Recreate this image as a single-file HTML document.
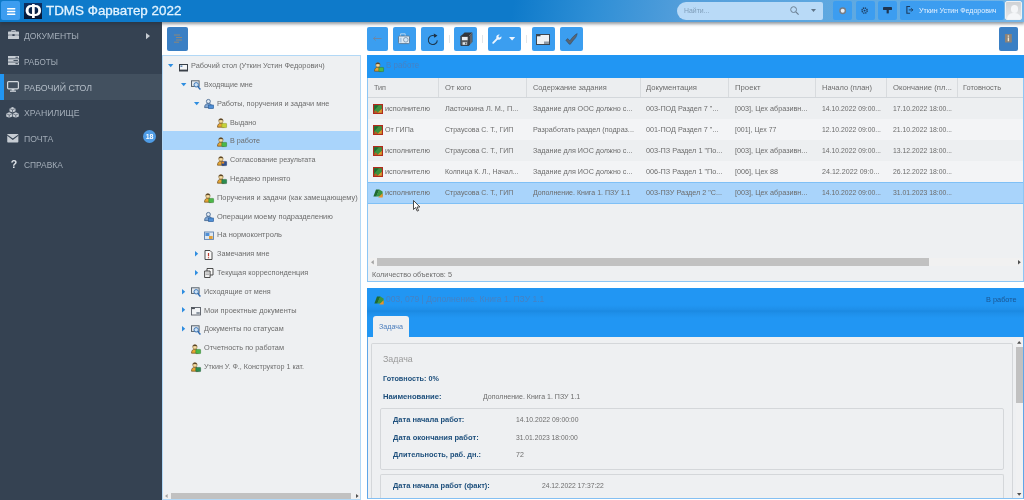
<!DOCTYPE html>
<html lang="ru"><head><meta charset="utf-8"><title>TDMS Фарватер 2022</title>
<style>
html,body{margin:0;padding:0}
body{width:1024px;height:500px;overflow:hidden;position:relative;background:#fff;font-family:"Liberation Sans",sans-serif;font-size:7.6px;color:#6c6c6c}
#app{position:absolute;left:0;top:0;width:1024px;height:500px;overflow:hidden;will-change:transform}
.a{position:absolute}
.t{position:absolute;white-space:nowrap;transform-origin:0 50%;line-height:12px;height:12px}
.b{font-weight:bold;color:#1d4f7c}
#hdr{left:0;top:0;width:1024px;height:21.8px;background:linear-gradient(100deg,#0e7aca 0%,#0e7aca 50%,#2f8fd6 58%,#559fdb 67%,#60aae2 85%,#74b5e7 100%);box-shadow:0 1.5px 3px .5px rgba(30,45,60,.5)}
#side{left:0;top:21.5px;width:162px;height:479px;background:#354252}
.hb{position:absolute;top:1.4px;height:18.4px;background:#3c9df0;border-radius:2px}
.tb{position:absolute;top:27.4px;height:23.2px;background:#3b9ef0;border-radius:2px}
.sep{position:absolute;top:34.5px;width:1px;height:8px;background:#e2e5e8}
#tree{left:162px;top:55px;width:199px;height:445px;background:#eef0f2;border:1px solid #b2d8f6;box-sizing:border-box}
.pn{position:absolute;box-sizing:border-box;border:1px solid #8cc6f5;background:#eef0f2}
.pt{position:absolute;background:#2196f3}
.gh{position:absolute;top:78px;height:19.6px;background:#eceef0;border-bottom:1.2px solid #d3d7db;box-sizing:border-box}
.gr{position:absolute;left:368px;width:655px}
.cs{position:absolute;top:78px;width:1px;height:19.6px;background:#d8dbde}
.fs{position:absolute;box-sizing:border-box;border:1px solid #d4d7da;border-radius:2px}
svg{position:absolute;overflow:visible}
</style></head><body>
<div id="app">
<div id="side" class="a"></div><div class="a" style="left:0;top:74px;width:162px;height:26px;background:#42505f"></div><div class="a" style="left:0;top:74px;width:4px;height:26px;background:#2196f3"></div><span class="t" style="left:23.6px;top:30.1px;transform:scaleX(0.895);font-size:9.6px;color:#a3adb8">ДОКУМЕНТЫ</span><span class="t" style="left:23.6px;top:55.9px;transform:scaleX(0.846);font-size:9.6px;color:#a3adb8">РАБОТЫ</span><span class="t" style="left:23.6px;top:81.7px;transform:scaleX(0.917);font-size:9.6px;color:#b4bdc7">РАБОЧИЙ СТОЛ</span><span class="t" style="left:23.6px;top:107.4px;transform:scaleX(0.910);font-size:9.6px;color:#a3adb8">ХРАНИЛИЩЕ</span><span class="t" style="left:23.6px;top:133.2px;transform:scaleX(0.901);font-size:9.6px;color:#a3adb8">ПОЧТА</span><span class="t" style="left:23.6px;top:159.0px;transform:scaleX(0.874);font-size:9.6px;color:#a3adb8">СПРАВКА</span>
<svg style="left:7.5px;top:30px" width="11" height="9" viewBox="0 0 11 9"><path d="M3.6 1.6V.6h3.8v1" fill="none" stroke="#c6ccd3" stroke-width="1"/><rect x="0" y="1.6" width="11" height="3.2" rx=".6" fill="#c6ccd3"/><rect x="0" y="5.3" width="11" height="3.7" rx=".6" fill="#c6ccd3"/><rect x="4.4" y="4.2" width="2.2" height="1.8" fill="#354252"/></svg><svg style="left:7.5px;top:56px" width="11" height="9" viewBox="0 0 11 9"><rect x="0" y="0" width="11" height="2.5" fill="#c6ccd3"/><rect x="0" y="3.2" width="11" height="2.5" fill="#c6ccd3"/><rect x="0" y="6.4" width="11" height="2.5" fill="#c6ccd3"/><rect x="7.5" y=".8" width="2.4" height=".9" fill="#354252"/><rect x="5.5" y="4" width="4.4" height=".9" fill="#354252"/><rect x="7.5" y="7.2" width="2.4" height=".9" fill="#354252"/></svg><svg style="left:7px;top:81px" width="12" height="11" viewBox="0 0 12 11"><rect x=".6" y=".6" width="10.8" height="7.2" rx="1" fill="none" stroke="#d3d9df" stroke-width="1.2"/><rect x="4.6" y="8" width="2.8" height="1.6" fill="#d3d9df"/><rect x="3" y="9.6" width="6" height="1.2" fill="#d3d9df"/></svg><svg style="left:6px;top:107px" width="13" height="11" viewBox="0 0 13 11"><path d="M6.5 0l3 1.4v2.8l-3 1.4-3-1.4V1.4z" fill="#c6ccd3"/><path d="M3.2 5.2l3 1.4v2.8l-3 1.4-3-1.4V6.6z" fill="#c6ccd3"/><path d="M9.8 5.2l3 1.4v2.8l-3 1.4-3-1.4V6.6z" fill="#c6ccd3"/><path d="M3.5 1.4l3 1.4 3-1.4M6.5 2.8v2.8M.2 6.6l3 1.4 3-1.4M3.2 8v2.8M6.8 6.6l3 1.4 3-1.4M9.8 8v2.8" fill="none" stroke="#354252" stroke-width=".6"/></svg><svg style="left:7.2px;top:134.3px" width="11.6" height="8.6" viewBox="0 0 11 8.5"><rect width="11" height="8.5" rx=".8" fill="#c6ccd3"/><path d="M0 1.2l5.5 4 5.5-4" fill="none" stroke="#354252" stroke-width="1"/></svg><span class="a" style="left:10.8px;top:157.8px;font-size:10.5px;font-weight:bold;color:#dfe3e8;line-height:12px">?</span><div class="a" style="left:143px;top:129.5px;width:13.2px;height:13px;border-radius:7px;background:#4f9ce6;color:#fff;font-size:7px;font-weight:bold;line-height:13px;text-align:center">18</div><svg style="left:146.3px;top:32.5px" width="4" height="6.2"><polygon points="0,0 4,3.1 0,6.2" fill="#c6ccd3"/></svg>
<div id="hdr" class="a"></div><div class="hb" style="left:1px;top:1px;width:18.5px;height:19px"></div><svg style="left:6.8px;top:7.7px" width="8.4" height="7" viewBox="0 0 9 7.5"><rect width="9" height="1.7" rx=".5" fill="#fff"/><rect y="2.9" width="9" height="1.7" rx=".5" fill="#fff"/><rect y="5.8" width="9" height="1.7" rx=".5" fill="#fff"/></svg><div class="a" style="left:24px;top:3px;width:17.5px;height:16px;background:linear-gradient(#0c2f63,#05142e)"></div><span class="a" style="left:25.3px;top:1.6px;font-size:20px;font-weight:bold;color:#fff;line-height:18px;transform:scaleX(.98);transform-origin:0 50%">Ф</span><span class="t" style="left:46.4px;top:4.8px;transform:scaleX(1.001);font-size:13.4px;color:#e2f3ff;-webkit-text-stroke:.3px #e2f3ff">TDMS Фарватер 2022</span><div class="a" style="left:677px;top:1.5px;width:146px;height:18.5px;background:#b9daf7;border-radius:9px 2px 2px 9px"></div><span class="t" style="left:683.6px;top:4.6px;transform:scaleX(0.906);color:#7f9db9">Найти...</span><svg style="left:790px;top:5.5px" width="9" height="9" viewBox="0 0 9 9"><circle cx="3.6" cy="3.6" r="2.9" fill="none" stroke="#6b7f92" stroke-width="1"/><path d="M5.8 5.8L8.6 8.6" stroke="#6b7f92" stroke-width="1.2"/></svg><svg style="left:811.3px;top:9.0px" width="5" height="3"><polygon points="0,0 5,0 2.5,3" fill="#5f7488"/></svg><div class="hb" style="left:833px;width:19px"></div><div class="hb" style="left:856px;width:18.5px"></div><div class="hb" style="left:878px;width:19px"></div><div class="hb" style="left:900px;width:103.5px"></div><svg style="left:838.8px;top:6.8px" width="7.4" height="7.4" viewBox="0 0 9 9"><circle cx="4.5" cy="4.5" r="4.2" fill="#767d86"/><circle cx="4.5" cy="4.5" r="2.4" fill="#e8eef5"/></svg><svg style="left:861.3px;top:6.6px" width="7.2" height="7.2" viewBox="0 0 9 9"><circle cx="4.5" cy="4.5" r="3.2" fill="none" stroke="#1e3e63" stroke-width="1.8" stroke-dasharray="1.6 .9"/><circle cx="4.5" cy="4.5" r="1.2" fill="#1e3e63"/></svg><svg style="left:883px;top:7.4px" width="9" height="6.4" viewBox="0 0 9 6.4"><rect x="0" y="0" width="9" height="3" rx=".4" fill="#1f3550"/><rect x="3.6" y="3" width="2.2" height="3.4" fill="#1f3550"/></svg><svg style="left:906.3px;top:6.4px" width="7.3" height="7.8" viewBox="0 0 8 9"><path d="M4.5 .6H.8v7.8h3.7" fill="none" stroke="#1c3c60" stroke-width="1.3"/><path d="M3 4.5h4.6M5.8 2.6l1.9 1.9-1.9 1.9" fill="none" stroke="#1c3c60" stroke-width="1.1"/></svg><span class="t" style="left:919.4px;top:5.2px;transform:scaleX(0.929);color:#e6f2ff">Уткин Устин Федорович</span><div class="a" style="left:1005px;top:1.3px;width:16.6px;height:18.5px;background:linear-gradient(#cfd2d5,#e6e8ea);border:.8px solid #eef1f4;box-sizing:border-box;border-radius:2px;overflow:hidden"><div class="a" style="left:4.5px;top:2.5px;width:7px;height:8px;border-radius:4px;background:#f4f6f8"></div><div class="a" style="left:1px;top:11px;width:14px;height:10px;border-radius:6px 6px 0 0;background:#f4f6f8"></div></div>
<div class="tb" style="left:167px;width:21px;background:#3a7fc4"></div><svg style="left:172.5px;top:34px" width="10" height="9" viewBox="0 0 10 9"><path d="M1 1h6M3 3.5h6M3 6h6M1 8.2h5" stroke="#a88a62" stroke-width=".9" opacity=".85"/></svg><div class="tb" style="left:366.8px;width:21px"></div><div class="tb" style="left:393px;width:22.8px"></div><div class="tb" style="left:421px;width:22.6px"></div><div class="tb" style="left:454.2px;width:22.8px"></div><div class="tb" style="left:487.8px;width:33.6px"></div><div class="tb" style="left:532px;width:22.6px"></div><div class="tb" style="left:559.8px;width:23px"></div><div class="sep" style="left:448.5px"></div><div class="sep" style="left:482px"></div><div class="sep" style="left:526.3px"></div><div class="tb" style="left:999px;width:18.5px;background:#3a7fc4"></div><svg style="left:373px;top:36px" width="9" height="5" viewBox="0 0 9 5"><path d="M.5 2.5h8M2.6 .6L.6 2.5l2 1.9" fill="none" stroke="#6d87a5" stroke-width="1"/></svg><svg style="left:398px;top:32.5px" width="12" height="11" viewBox="0 0 12 11"><path d="M2.6 3V.8h4.6V3" fill="none" stroke="#b4d2ee" stroke-width="1"/><rect x=".5" y="3" width="11" height="7.6" rx="1" fill="#dfe9f3" stroke="#5b7894" stroke-width=".9"/><circle cx="7.8" cy="6.8" r="2.3" fill="#d6e8f8" stroke="#6b88a4" stroke-width=".7"/><rect x="1.6" y="4.8" width="2" height="4.6" fill="#a9c8e6"/></svg><svg style="left:427px;top:32.6px" width="11.6" height="12.6" viewBox="0 0 11 12"><path d="M8.6 3.7A4.3 4.3 0 1 0 9.8 7" fill="none" stroke="#1d3850" stroke-width="1"/><path d="M6.4 .4l3.6 2.1-3.3 2z" fill="#1d3145"/></svg><svg style="left:459.6px;top:31.8px" width="13" height="14" viewBox="0 0 13 14"><path d="M1 4L4.6 .6h7.8v9.4L9 13.4H1z" fill="#33373d"/><path d="M9 4L12.4 .8M10.2 3.4v8.6M11.3 2.4v8.6" stroke="#9aa1a9" stroke-width=".55"/><path d="M.8 4h8v9.4h-8z" fill="#565b62" stroke="#2b2f35" stroke-width=".7"/><rect x="2" y="5" width="5.6" height="3.2" fill="#e9edf1"/><rect x="2.6" y="10.2" width="4.4" height="2.6" fill="#dfe3e8"/><rect x="5.2" y="10.6" width="1.2" height="1.8" fill="#3a3e44"/></svg><svg style="left:492.4px;top:34.1px" width="10" height="10" viewBox="0 0 10 10"><path d="M1.2 8.8L5.6 4.4" stroke="#eef6ff" stroke-width="1.9" stroke-linecap="round"/><path d="M9.3 2.2A2.6 2.6 0 1 1 7.8 .7L6.4 2.1l.3 1.2 1.2.3z" fill="#eef6ff"/></svg><svg style="left:509.0px;top:37.0px" width="6.2" height="3.5"><polygon points="0,0 6.2,0 3.1,3.5" fill="#eef6ff"/></svg><svg style="left:536.2px;top:33.6px" width="14" height="11" viewBox="0 0 14 11"><rect x=".5" y=".5" width="13" height="10" fill="#eef1f4" stroke="#3d4650" stroke-width="1"/><rect x=".5" y=".5" width="4" height="1.8" fill="#3d4650"/><rect x="8" y="7.5" width="5" height="2.5" fill="#8e98a3"/></svg><svg style="left:565px;top:32.5px" width="13" height="12" viewBox="0 0 13 12"><path d="M.8 7.2l2-1.6 2 2.2C7.5 4 9.8 1.8 12.2.6c-.6 2.6-1.2 3.6-1.8 4.4C8.6 6.8 7 9 5.4 11.2H4.2z" fill="#5a6572" stroke="#2f4660" stroke-width=".5"/></svg><svg style="left:1004.3px;top:34.2px" width="8.8" height="8.6" viewBox="0 0 8 10"><rect width="8" height="10" rx=".6" fill="#8d8378"/><rect x="3.2" y="1.6" width="1.6" height="1.6" fill="#f0e6d0"/><rect x="3.2" y="4" width="1.6" height="4.4" fill="#f0e6d0"/></svg>
<div id="tree" class="a"></div><div class="a" style="left:163px;top:131.4px;width:197px;height:18.7px;background:#a9d4fb"></div><svg style="left:168.3px;top:64.0px" width="5.4" height="3.2"><polygon points="0,0 5.4,0 2.7,3.2" fill="#2e8de0"/></svg><svg style="left:178.9px;top:63.6px" width="9" height="7.5" viewBox="0 0 9 7.5"><rect x=".5" y=".5" width="8" height="6.5" fill="#f4f6f8" stroke="#3a4048" stroke-width="1"/><rect x=".5" y="5.6" width="8" height="1.4" fill="#3a4048"/><rect x="1.4" y="1.4" width="2" height="1.6" fill="#5f87b5"/></svg><span class="t" style="left:191.4px;top:60.2px;transform:scaleX(0.967)">Рабочий стол (Уткин Устин Федорович)</span>
<svg style="left:181.2px;top:82.8px" width="5.4" height="3.2"><polygon points="0,0 5.4,0 2.7,3.2" fill="#2e8de0"/></svg><svg style="left:190.9px;top:80.4px" width="10" height="10" viewBox="0 0 10 10"><rect x=".5" y=".8" width="7.6" height="5.6" fill="#e3e8ee" stroke="#4b5661" stroke-width=".9"/><circle cx="5.2" cy="4.8" r="2.2" fill="#cfe3f6" stroke="#3d78b8" stroke-width="1"/><path d="M6.8 6.6L9.4 9.4" stroke="#2f6db5" stroke-width="1.4"/></svg><span class="t" style="left:204.3px;top:79.0px;transform:scaleX(0.942)">Входящие мне</span>
<svg style="left:194.1px;top:101.6px" width="5.4" height="3.2"><polygon points="0,0 5.4,0 2.7,3.2" fill="#2e8de0"/></svg><svg style="left:203.8px;top:99.2px" width="10" height="10" viewBox="0 0 10 10"><circle cx="4.4" cy="2.4" r="2" fill="#dfe8f2" stroke="#3c5f8a" stroke-width=".8"/><path d="M.6 8.6c0-3 1.6-4 3.8-4s3.8 1 3.8 4z" fill="#7fa6d3" stroke="#3c5f8a" stroke-width=".8"/><rect x="4.6" y="6" width="5" height="3.6" fill="#4f8fd6" stroke="#2a5a96" stroke-width=".6"/></svg><span class="t" style="left:217.2px;top:97.8px;transform:scaleX(0.967)">Работы, поручения и задачи мне</span>
<svg style="left:216.7px;top:118px" width="10" height="10" viewBox="0 0 10 10"><path d="M.5 9.2c0-2.8 1.3-4 3.4-4s3.4 1.2 3.4 4z" fill="#e6a632" stroke="#6b4a1c" stroke-width=".7"/><circle cx="3.9" cy="2.9" r="2.2" fill="#f6dca0" stroke="#8a6a32" stroke-width=".6"/><path d="M1.8 2.2A2.2 2.2 0 0 1 6 2.2 3 1.2 0 0 0 1.8 2.2z" fill="#4a3820" stroke="#4a3820" stroke-width=".3"/><rect x="4.8" y="5.4" width="4.8" height="4.2" rx=".5" fill="#c6d13a" stroke="#8a9420" stroke-width=".5"/></svg><span class="t" style="left:230.1px;top:116.6px;transform:scaleX(0.952)">Выдано</span>
<svg style="left:216.7px;top:136.8px" width="10" height="10" viewBox="0 0 10 10"><path d="M.5 9.2c0-2.8 1.3-4 3.4-4s3.4 1.2 3.4 4z" fill="#e6a632" stroke="#6b4a1c" stroke-width=".7"/><circle cx="3.9" cy="2.9" r="2.2" fill="#f6dca0" stroke="#8a6a32" stroke-width=".6"/><path d="M1.8 2.2A2.2 2.2 0 0 1 6 2.2 3 1.2 0 0 0 1.8 2.2z" fill="#4a3820" stroke="#4a3820" stroke-width=".3"/><rect x="4.8" y="5.4" width="4.8" height="4.2" rx=".5" fill="#4cb848" stroke="#2f7a2c" stroke-width=".5"/></svg><span class="t" style="left:230.1px;top:135.4px;transform:scaleX(0.947)">В работе</span>
<svg style="left:216.7px;top:155.6px" width="10" height="10" viewBox="0 0 10 10"><path d="M.5 9.2c0-2.8 1.3-4 3.4-4s3.4 1.2 3.4 4z" fill="#e6a632" stroke="#6b4a1c" stroke-width=".7"/><circle cx="3.9" cy="2.9" r="2.2" fill="#f6dca0" stroke="#8a6a32" stroke-width=".6"/><path d="M1.8 2.2A2.2 2.2 0 0 1 6 2.2 3 1.2 0 0 0 1.8 2.2z" fill="#4a3820" stroke="#4a3820" stroke-width=".3"/><rect x="4.8" y="5.4" width="4.8" height="4.2" rx=".5" fill="#2f4f8f" stroke="#1f3566" stroke-width=".5"/><rect x="4.8" y="5.6" width="2.4" height="2" fill="#e08a2a"/></svg><span class="t" style="left:230.1px;top:154.2px;transform:scaleX(0.947)">Согласование результата</span>
<svg style="left:216.7px;top:174.4px" width="10" height="10" viewBox="0 0 10 10"><path d="M.5 9.2c0-2.8 1.3-4 3.4-4s3.4 1.2 3.4 4z" fill="#e6a632" stroke="#6b4a1c" stroke-width=".7"/><circle cx="3.9" cy="2.9" r="2.2" fill="#f6dca0" stroke="#8a6a32" stroke-width=".6"/><path d="M1.8 2.2A2.2 2.2 0 0 1 6 2.2 3 1.2 0 0 0 1.8 2.2z" fill="#4a3820" stroke="#4a3820" stroke-width=".3"/><rect x="4.8" y="5.4" width="4.8" height="4.2" rx=".5" fill="#2c8c50" stroke="#1d5c34" stroke-width=".5"/></svg><span class="t" style="left:230.1px;top:173.0px;transform:scaleX(0.987)">Недавно принято</span>
<svg style="left:203.8px;top:193.2px" width="10" height="10" viewBox="0 0 10 10"><path d="M.5 9.2c0-2.8 1.3-4 3.4-4s3.4 1.2 3.4 4z" fill="#e6a632" stroke="#6b4a1c" stroke-width=".7"/><circle cx="3.9" cy="2.9" r="2.2" fill="#f6dca0" stroke="#8a6a32" stroke-width=".6"/><path d="M1.8 2.2A2.2 2.2 0 0 1 6 2.2 3 1.2 0 0 0 1.8 2.2z" fill="#4a3820" stroke="#4a3820" stroke-width=".3"/><rect x="4.8" y="5.4" width="4.8" height="4.2" rx=".5" fill="#4cb848" stroke="#2f7a2c" stroke-width=".5"/></svg><span class="t" style="left:217.2px;top:191.8px;transform:scaleX(0.975)">Поручения и задачи (как замещающему)</span>
<svg style="left:203.8px;top:212px" width="10" height="10" viewBox="0 0 10 10"><circle cx="4.4" cy="2.4" r="2" fill="#dfe8f2" stroke="#3c5f8a" stroke-width=".8"/><path d="M.6 8.6c0-3 1.6-4 3.8-4s3.8 1 3.8 4z" fill="#7fa6d3" stroke="#3c5f8a" stroke-width=".8"/><rect x="4.6" y="6" width="5" height="3.6" fill="#4f8fd6" stroke="#2a5a96" stroke-width=".6"/></svg><span class="t" style="left:217.2px;top:210.6px;transform:scaleX(0.982)">Операции моему подразделению</span>
<svg style="left:203.8px;top:230.8px" width="10" height="10" viewBox="0 0 10 10"><rect x=".5" y="1" width="9" height="7.4" fill="#dfe7f0" stroke="#5a7fae" stroke-width=".9"/><rect x="1.4" y="2" width="4" height="3" fill="#4f8fd6"/><rect x="5" y="5" width="3.6" height="3" fill="#e2a13a"/></svg><span class="t" style="left:217.2px;top:229.4px;transform:scaleX(0.986)">На нормоконтроль</span>
<svg style="left:195.3px;top:251.0px" width="3.2" height="5.4"><polygon points="0,0 3.2,2.7 0,5.4" fill="#2e8de0"/></svg><svg style="left:204.3px;top:249.6px" width="9" height="10" viewBox="0 0 9 10"><path d="M1 .5h5l2 2v7H1z" fill="#fafafa" stroke="#3a3a3a" stroke-width=".9"/><path d="M4.5 3v3.2M4.5 7.2v1" stroke="#c0392b" stroke-width="1.2"/></svg><span class="t" style="left:217.2px;top:248.2px;transform:scaleX(0.963)">Замечания мне</span>
<svg style="left:195.3px;top:269.8px" width="3.2" height="5.4"><polygon points="0,0 3.2,2.7 0,5.4" fill="#2e8de0"/></svg><svg style="left:203.8px;top:268.4px" width="10" height="10" viewBox="0 0 10 10"><path d="M3 .5h6v6.5H3z" fill="#fafafa" stroke="#3a3a3a" stroke-width=".9"/><path d="M.6 3h5.5v6.5H.6z" fill="#f2f2f2" stroke="#3a3a3a" stroke-width=".9"/><path d="M1.6 5h3.4M1.6 6.6h3.4" stroke="#777" stroke-width=".6"/></svg><span class="t" style="left:217.2px;top:267.0px;transform:scaleX(0.965)">Текущая корреспонденция</span>
<svg style="left:182.4px;top:288.6px" width="3.2" height="5.4"><polygon points="0,0 3.2,2.7 0,5.4" fill="#2e8de0"/></svg><svg style="left:190.9px;top:287.2px" width="10" height="10" viewBox="0 0 10 10"><rect x=".5" y=".8" width="7.6" height="5.6" fill="#e3e8ee" stroke="#4b5661" stroke-width=".9"/><circle cx="5.2" cy="4.8" r="2.2" fill="#cfe3f6" stroke="#3d78b8" stroke-width="1"/><path d="M6.8 6.6L9.4 9.4" stroke="#2f6db5" stroke-width="1.4"/></svg><span class="t" style="left:204.3px;top:285.8px;transform:scaleX(0.956)">Исходящие от меня</span>
<svg style="left:182.4px;top:307.4px" width="3.2" height="5.4"><polygon points="0,0 3.2,2.7 0,5.4" fill="#2e8de0"/></svg><svg style="left:190.9px;top:307px" width="10" height="8.5" viewBox="0 0 10 8.5"><rect x=".5" y=".5" width="9" height="7.5" fill="#f1f3f5" stroke="#4c525a" stroke-width=".85"/><rect x=".5" y=".5" width="3.4" height="1.6" fill="#4c525a"/><rect x="5.4" y="5" width="3.4" height="2.2" fill="#8e98a3"/></svg><span class="t" style="left:204.3px;top:304.6px;transform:scaleX(0.974)">Мои проектные документы</span>
<svg style="left:182.4px;top:326.2px" width="3.2" height="5.4"><polygon points="0,0 3.2,2.7 0,5.4" fill="#2e8de0"/></svg><svg style="left:190.9px;top:324.8px" width="10" height="10" viewBox="0 0 10 10"><rect x=".5" y=".8" width="7.6" height="5.6" fill="#e3e8ee" stroke="#4b5661" stroke-width=".9"/><circle cx="5.2" cy="4.8" r="2.2" fill="#cfe3f6" stroke="#3d78b8" stroke-width="1"/><path d="M6.8 6.6L9.4 9.4" stroke="#2f6db5" stroke-width="1.4"/></svg><span class="t" style="left:204.3px;top:323.4px;transform:scaleX(0.954)">Документы по статусам</span>
<svg style="left:190.9px;top:343.6px" width="10" height="10" viewBox="0 0 10 10"><path d="M.5 9.2c0-2.8 1.3-4 3.4-4s3.4 1.2 3.4 4z" fill="#e6a632" stroke="#6b4a1c" stroke-width=".7"/><circle cx="3.9" cy="2.9" r="2.2" fill="#f6dca0" stroke="#8a6a32" stroke-width=".6"/><path d="M1.8 2.2A2.2 2.2 0 0 1 6 2.2 3 1.2 0 0 0 1.8 2.2z" fill="#4a3820" stroke="#4a3820" stroke-width=".3"/><rect x="4.8" y="5.4" width="4.8" height="4.2" rx=".5" fill="#4cb848" stroke="#2f7a2c" stroke-width=".5"/></svg><span class="t" style="left:204.3px;top:342.2px;transform:scaleX(0.967)">Отчетность по работам</span>
<svg style="left:190.9px;top:362.4px" width="10" height="10" viewBox="0 0 10 10"><path d="M.5 9.2c0-2.8 1.3-4 3.4-4s3.4 1.2 3.4 4z" fill="#e6a632" stroke="#6b4a1c" stroke-width=".7"/><circle cx="3.9" cy="2.9" r="2.2" fill="#f6dca0" stroke="#8a6a32" stroke-width=".6"/><path d="M1.8 2.2A2.2 2.2 0 0 1 6 2.2 3 1.2 0 0 0 1.8 2.2z" fill="#4a3820" stroke="#4a3820" stroke-width=".3"/><rect x="4.8" y="5.4" width="4.8" height="4.2" rx=".5" fill="#2c8c50" stroke="#1d5c34" stroke-width=".5"/></svg><span class="t" style="left:204.3px;top:361.0px;transform:scaleX(0.940)">Уткин У. Ф., Конструктор 1 кат.</span>
<div class="a" style="left:163px;top:492.6px;width:197px;height:6.4px;background:#f0f0f0"></div><div class="a" style="left:170.6px;top:492.6px;width:180px;height:6.4px;background:#c1c1c1"></div><svg style="left:165.0px;top:493.8px" width="2.6" height="4"><polygon points="2.6,0 2.6,4 0,2" fill="#a3a3a3"/></svg><svg style="left:356.0px;top:493.8px" width="2.6" height="4"><polygon points="0,0 2.6,2 0,4" fill="#505050"/></svg>
<div class="pn" style="left:367px;top:55px;width:657px;height:227px"></div><div class="pt" style="left:367px;top:55px;width:657px;height:23px"></div><svg style="left:374px;top:61.5px" width="10" height="10" viewBox="0 0 10 10"><path d="M.5 9.2c0-2.8 1.3-4 3.4-4s3.4 1.2 3.4 4z" fill="#e6a632" stroke="#6b4a1c" stroke-width=".7"/><circle cx="3.9" cy="2.9" r="2.2" fill="#f6dca0" stroke="#8a6a32" stroke-width=".6"/><path d="M1.8 2.2A2.2 2.2 0 0 1 6 2.2 3 1.2 0 0 0 1.8 2.2z" fill="#4a3820" stroke="#4a3820" stroke-width=".3"/><rect x="4.8" y="5.4" width="4.8" height="4.2" rx=".5" fill="#4cb848" stroke="#2f7a2c" stroke-width=".5"/></svg><span class="t" style="left:386.2px;top:59.8px;transform:scaleX(0.972);font-size:8.2px;color:#4682c4">В работе</span><div class="gh" style="left:368px;width:655px"></div><span class="t" style="left:374.0px;top:81.7px;transform:scaleX(0.947)">Тип</span><div class="cs" style="left:438px"></div><span class="t" style="left:444.8px;top:81.7px;transform:scaleX(1.013)">От кого</span><div class="cs" style="left:526px"></div><span class="t" style="left:532.6px;top:81.7px;transform:scaleX(0.978)">Содержание задания</span><div class="cs" style="left:640px"></div><span class="t" style="left:646.0px;top:81.7px;transform:scaleX(1.009)">Документация</span><div class="cs" style="left:728px"></div><span class="t" style="left:734.5px;top:81.7px;transform:scaleX(1.019)">Проект</span><div class="cs" style="left:815px"></div><span class="t" style="left:822.0px;top:81.7px;transform:scaleX(0.988)">Начало (план)</span><div class="cs" style="left:886px"></div><span class="t" style="left:893.0px;top:81.7px;transform:scaleX(1.015)">Окончание (пл...</span><div class="cs" style="left:957px"></div><span class="t" style="left:963.0px;top:81.7px;transform:scaleX(0.975)">Готовность</span>
<div class="gr" style="top:97.5px;height:21.1px;background:#edeff1"></div><svg style="left:373px;top:103.5px" width="10" height="10" viewBox="0 0 10 10"><rect x=".6" y=".6" width="8.8" height="8.8" fill="#3c9440" stroke="#b22a1c" stroke-width="1.2"/><path d="M4.6 8.8L8.8 4.8v4z" fill="#ec922c"/><path d="M1.2 1.2h4.6L1.2 6.4z" fill="#1f6a30"/><path d="M1.2 8.8h4L2.6 6.6z" fill="#d8501e"/></svg><span class="t" style="left:385.2px;top:102.7px;transform:scaleX(0.966)">исполнителю</span><span class="t" style="left:444.8px;top:102.7px;transform:scaleX(0.962)">Ласточкина Л. М., П...</span><span class="t" style="left:532.6px;top:102.7px;transform:scaleX(0.943)">Задание для ООС должно с...</span><span class="t" style="left:646.0px;top:102.7px;transform:scaleX(0.950)">003-ПОД Раздел 7 &quot;...</span><span class="t" style="left:734.5px;top:102.7px;transform:scaleX(0.954)">[003], Цех абразивн...</span><span class="t" style="left:822.0px;top:102.7px;transform:scaleX(0.901)">14.10.2022 09:00...</span><span class="t" style="left:893.0px;top:102.7px;transform:scaleX(0.901)">17.10.2022 18:00...</span>
<div class="gr" style="top:118.5px;height:21.1px;background:#f3f4f6"></div><svg style="left:373px;top:124.5px" width="10" height="10" viewBox="0 0 10 10"><rect x=".6" y=".6" width="8.8" height="8.8" fill="#3c9440" stroke="#b22a1c" stroke-width="1.2"/><path d="M4.6 8.8L8.8 4.8v4z" fill="#ec922c"/><path d="M1.2 1.2h4.6L1.2 6.4z" fill="#1f6a30"/><path d="M1.2 8.8h4L2.6 6.6z" fill="#d8501e"/></svg><span class="t" style="left:385.2px;top:123.8px;transform:scaleX(0.936)">От ГИПа</span><span class="t" style="left:444.8px;top:123.8px;transform:scaleX(0.919)">Страусова С. Т., ГИП</span><span class="t" style="left:532.6px;top:123.8px;transform:scaleX(0.950)">Разработать раздел (подраз...</span><span class="t" style="left:646.0px;top:123.8px;transform:scaleX(0.950)">001-ПОД Раздел 7 &quot;...</span><span class="t" style="left:734.5px;top:123.8px;transform:scaleX(0.919)">[001], Цех 77</span><span class="t" style="left:822.0px;top:123.8px;transform:scaleX(0.901)">12.10.2022 09:00...</span><span class="t" style="left:893.0px;top:123.8px;transform:scaleX(0.901)">21.10.2022 18:00...</span>
<div class="gr" style="top:139.6px;height:21.1px;background:#edeff1"></div><svg style="left:373px;top:145.6px" width="10" height="10" viewBox="0 0 10 10"><rect x=".6" y=".6" width="8.8" height="8.8" fill="#3c9440" stroke="#b22a1c" stroke-width="1.2"/><path d="M4.6 8.8L8.8 4.8v4z" fill="#ec922c"/><path d="M1.2 1.2h4.6L1.2 6.4z" fill="#1f6a30"/><path d="M1.2 8.8h4L2.6 6.6z" fill="#d8501e"/></svg><span class="t" style="left:385.2px;top:144.8px;transform:scaleX(0.966)">исполнителю</span><span class="t" style="left:444.8px;top:144.8px;transform:scaleX(0.919)">Страусова С. Т., ГИП</span><span class="t" style="left:532.6px;top:144.8px;transform:scaleX(0.948)">Задание для ИОС должно с...</span><span class="t" style="left:646.0px;top:144.8px;transform:scaleX(0.960)">003-ПЗ Раздел 1 &quot;По...</span><span class="t" style="left:734.5px;top:144.8px;transform:scaleX(0.954)">[003], Цех абразивн...</span><span class="t" style="left:822.0px;top:144.8px;transform:scaleX(0.901)">14.10.2022 09:00...</span><span class="t" style="left:893.0px;top:144.8px;transform:scaleX(0.901)">13.12.2022 18:00...</span>
<div class="gr" style="top:160.7px;height:21.1px;background:#f3f4f6"></div><svg style="left:373px;top:166.7px" width="10" height="10" viewBox="0 0 10 10"><rect x=".6" y=".6" width="8.8" height="8.8" fill="#3c9440" stroke="#b22a1c" stroke-width="1.2"/><path d="M4.6 8.8L8.8 4.8v4z" fill="#ec922c"/><path d="M1.2 1.2h4.6L1.2 6.4z" fill="#1f6a30"/><path d="M1.2 8.8h4L2.6 6.6z" fill="#d8501e"/></svg><span class="t" style="left:385.2px;top:165.8px;transform:scaleX(0.966)">исполнителю</span><span class="t" style="left:444.8px;top:165.8px;transform:scaleX(0.914)">Колпица К. Л., Начал...</span><span class="t" style="left:532.6px;top:165.8px;transform:scaleX(0.948)">Задание для ИОС должно с...</span><span class="t" style="left:646.0px;top:165.8px;transform:scaleX(0.960)">006-ПЗ Раздел 1 &quot;По...</span><span class="t" style="left:734.5px;top:165.8px;transform:scaleX(0.952)">[006], Цех 88</span><span class="t" style="left:822.0px;top:165.8px;transform:scaleX(0.938)">24.12.2022 09:0...</span><span class="t" style="left:893.0px;top:165.8px;transform:scaleX(0.901)">26.12.2022 18:00...</span>
<div class="gr" style="top:182.0px;height:21.6px;background:#a9d4fb;box-shadow:inset 0 1px 0 #7fc0f6,inset 0 -1px 0 #7fc0f6"></div><svg style="left:373px;top:187.7px" width="10" height="10" viewBox="0 0 10 10"><path d="M.4 8.4L3 1.4h3.4L3.4 8.4z" fill="#1f6a30"/><path d="M3.2 8.6L6.2 1.4l3.4 2.2v5z" fill="#3c9440"/><path d="M5.2 9.4L9.6 5.2v4.2z" fill="#ec922c"/></svg><span class="t" style="left:385.2px;top:186.9px;transform:scaleX(0.966)">исполнителю</span><span class="t" style="left:444.8px;top:186.9px;transform:scaleX(0.919)">Страусова С. Т., ГИП</span><span class="t" style="left:532.6px;top:186.9px;transform:scaleX(0.928)">Дополнение. Книга 1. ПЗУ 1.1</span><span class="t" style="left:646.0px;top:186.9px;transform:scaleX(0.948)">003-ПЗУ Раздел 2 &quot;С...</span><span class="t" style="left:734.5px;top:186.9px;transform:scaleX(0.954)">[003], Цех абразивн...</span><span class="t" style="left:822.0px;top:186.9px;transform:scaleX(0.901)">14.10.2022 09:00...</span><span class="t" style="left:893.0px;top:186.9px;transform:scaleX(0.901)">31.01.2023 18:00...</span>
<div class="a" style="left:368px;top:96.5px;width:655px;height:1.2px;background:#d3d7db"></div><div class="a" style="left:368px;top:258px;width:655px;height:7.6px;background:#f1f1f1"></div><div class="a" style="left:377px;top:258px;width:552px;height:7.6px;background:#c1c1c1"></div><svg style="left:371.3px;top:259.6px" width="2.8" height="4.4"><polygon points="2.8,0 2.8,4.4 0,2.2" fill="#a3a3a3"/></svg><svg style="left:1017.5px;top:259.6px" width="2.8" height="4.4"><polygon points="0,0 2.8,2.2 0,4.4" fill="#505050"/></svg><span class="t" style="left:372.4px;top:268.6px;transform:scaleX(0.955)">Количество объектов: 5</span><svg style="left:413px;top:200px" width="8" height="12" viewBox="0 0 8 12"><path d="M.5 .5v9l2.1-2 1.6 3.6 1.4-.6-1.6-3.5h2.9z" fill="#fff" stroke="#222" stroke-width=".8"/></svg>
<div class="pn" style="left:366.6px;top:288px;width:657.4px;height:211.2px;border-color:#5ea6e8;border-width:0 1.4px 1.6px 1.4px;border-bottom-color:#84c0f3"></div><div class="pt" style="left:367px;top:288px;width:657px;height:49px"></div><div class="a" style="left:367px;top:305px;width:657px;height:13px;background:linear-gradient(#2196f3 0%,#1e8fe9 35%,#1b89e2 46%,#1e8fe9 62%,#2196f3 100%)"></div><svg style="left:374.4px;top:294.8px" width="10" height="10" viewBox="0 0 10 10"><path d="M.4 8.4L3 1.4h3.4L3.4 8.4z" fill="#1f6a30"/><path d="M3.2 8.6L6.2 1.4l3.4 2.2v5z" fill="#3c9440"/><path d="M5.2 9.4L9.6 5.2v4.2z" fill="#ec922c"/></svg><span class="t" style="left:386.2px;top:294.3px;transform:scaleX(1.043);font-size:8.2px;color:#4682c4">003, 079 | Дополнение. Книга 1. ПЗУ 1.1</span><span class="t" style="left:985.8px;top:293.8px;transform:scaleX(0.969);color:#1b5590">В работе</span><div class="a" style="left:373px;top:316px;width:35.6px;height:21.5px;background:#eef0f2;border-radius:3px 3px 0 0"></div><span class="t" style="left:378.6px;top:321.2px;transform:scaleX(0.941);color:#4a7dbd">Задача</span><div class="fs" style="left:371.4px;top:343px;width:641.6px;height:154.6px;border-bottom:none;border-radius:2px 2px 0 0"></div><span class="t" style="left:383.0px;top:353.0px;transform:scaleX(0.922);font-size:9.6px;color:#9a9a9a">Задача</span><span class="t b" style="left:383.0px;top:373.1px;transform:scaleX(0.952)">Готовность: 0%</span><span class="t b" style="left:383.0px;top:390.5px;transform:scaleX(1.005)">Наименование:</span><span class="t" style="left:483.0px;top:390.5px;transform:scaleX(0.926)">Дополнение. Книга 1. ПЗУ 1.1</span><div class="fs" style="left:380.4px;top:408.3px;width:623.4px;height:61.7px"></div><span class="t b" style="left:392.6px;top:414.1px;transform:scaleX(0.986)">Дата начала работ:</span><span class="t" style="left:515.7px;top:414.1px;transform:scaleX(0.896)">14.10.2022 09:00:00</span><span class="t b" style="left:392.6px;top:431.5px;transform:scaleX(0.997)">Дата окончания работ:</span><span class="t" style="left:515.7px;top:431.5px;transform:scaleX(0.886)">31.01.2023 18:00:00</span><span class="t b" style="left:392.6px;top:448.8px;transform:scaleX(0.977)">Длительность, раб. дн.:</span><span class="t" style="left:515.7px;top:448.8px;transform:scaleX(0.923)">72</span><div class="fs" style="left:380.4px;top:474.4px;width:623.4px;height:23.2px;border-bottom:none;border-radius:2px 2px 0 0"></div><span class="t b" style="left:392.6px;top:480.1px;transform:scaleX(0.989)">Дата начала работ (факт):</span><span class="t" style="left:541.8px;top:480.1px;transform:scaleX(0.888)">24.12.2022 17:37:22</span><div class="a" style="left:1015.5px;top:338px;width:7px;height:159.5px;background:#f0f1f2"></div><div class="a" style="left:1015.5px;top:346.8px;width:7.5px;height:56px;background:#c1c1c1"></div><svg style="left:1017.0px;top:340.8px" width="4.4" height="2.8"><polygon points="0,2.8 4.4,2.8 2.2,0" fill="#505050"/></svg><svg style="left:1017.0px;top:493.4px" width="4.4" height="2.8"><polygon points="0,0 4.4,0 2.2,2.8" fill="#505050"/></svg>
</div>
</body></html>
